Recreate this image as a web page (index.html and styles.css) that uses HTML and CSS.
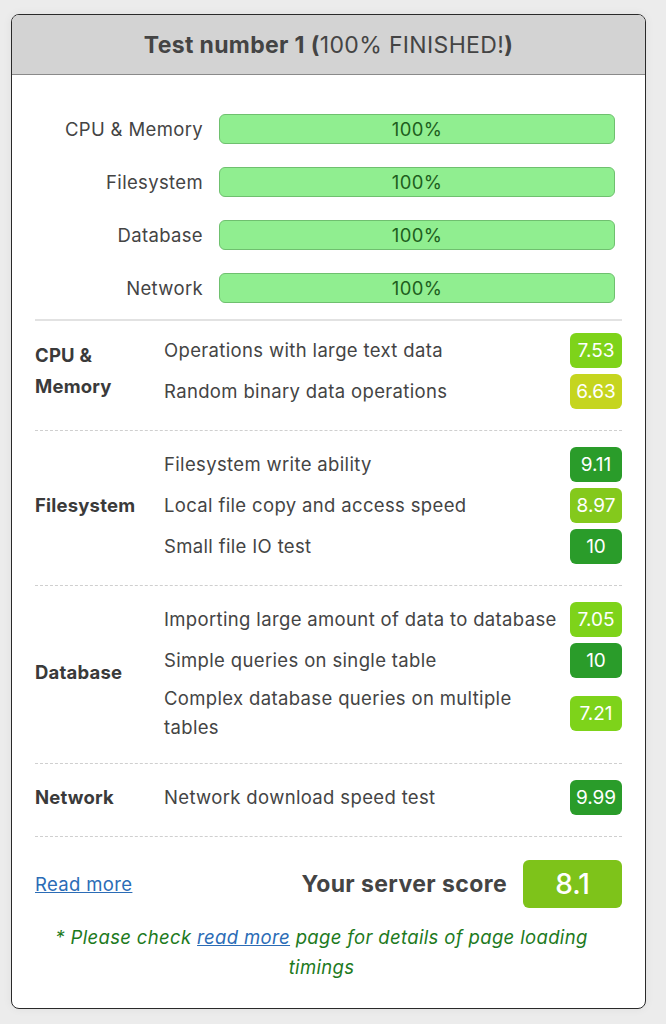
FILE: index.html
```html
<!DOCTYPE html>
<html>
<head>
<meta charset="utf-8">
<link rel="stylesheet" href="styles.css">
</head>
<body>
<div class="card">
  <div class="card-head">
    <h1 class="title">Test number 1 (<span class="title-status">100% FINISHED!</span>)</h1>
  </div>
  <div class="card-body">
    <div class="progress">
      <div class="progress-row">
        <div class="progress-label">CPU &amp; Memory</div>
        <div class="bar">100%</div>
      </div>
      <div class="progress-row">
        <div class="progress-label">Filesystem</div>
        <div class="bar">100%</div>
      </div>
      <div class="progress-row">
        <div class="progress-label">Database</div>
        <div class="bar">100%</div>
      </div>
      <div class="progress-row">
        <div class="progress-label">Network</div>
        <div class="bar">100%</div>
      </div>
    </div>

    <div class="results">
      <div class="group group-first">
        <div class="group-name">CPU &amp; Memory</div>
        <div class="tests">
          <div class="test"><span class="test-name">Operations with large text data</span><span class="score s-lime">7.53</span></div>
          <div class="test"><span class="test-name">Random binary data operations</span><span class="score s-yellow">6.63</span></div>
        </div>
      </div>
      <div class="group">
        <div class="group-name">Filesystem</div>
        <div class="tests">
          <div class="test"><span class="test-name">Filesystem write ability</span><span class="score s-green">9.11</span></div>
          <div class="test"><span class="test-name">Local file copy and access speed</span><span class="score s-lime2">8.97</span></div>
          <div class="test"><span class="test-name">Small file IO test</span><span class="score s-green">10</span></div>
        </div>
      </div>
      <div class="group">
        <div class="group-name">Database</div>
        <div class="tests">
          <div class="test"><span class="test-name">Importing large amount of data to database</span><span class="score s-lime">7.05</span></div>
          <div class="test"><span class="test-name">Simple queries on single table</span><span class="score s-green">10</span></div>
          <div class="test"><span class="test-name">Complex database queries on multiple tables</span><span class="score s-lime">7.21</span></div>
        </div>
      </div>
      <div class="group">
        <div class="group-name">Network</div>
        <div class="tests">
          <div class="test"><span class="test-name">Network download speed test</span><span class="score s-green">9.99</span></div>
        </div>
      </div>
    </div>

    <div class="summary">
      <a class="link" href="#">Read more</a>
      <div class="total">
        <span class="total-label">Your server score</span>
        <span class="total-score">8.1</span>
      </div>
    </div>
    <p class="note">* Please check <a class="link" href="#">read more</a> page for details of page loading timings</p>
  </div>
</div>
</body>
</html>
```

FILE: styles.css
```css
html, body {
  margin: 0;
  padding: 0;
}
body {
  background: #ececec;
  font-family: Inter, Roboto, "Liberation Sans", sans-serif;
  color: #444;
  padding: 14px 20px 16px 11px;
}
.card {
  width: 633px;
  background: #fff;
  border: 1px solid #2a2a2a;
  border-radius: 8px;
  overflow: hidden;
  box-shadow: 0 0 10px rgba(0,0,0,0.06);
}
.card-head {
  background: #d3d3d3;
  border-bottom: 1px solid #8a8a8a;
  height: 59px;
  display: flex;
  align-items: center;
  justify-content: center;
}
.title {
  margin: 0;
  font-size: 23px;
  font-weight: 700;
  letter-spacing: 0.35px;
  color: #444;
}
.title-status {
  font-weight: 400;
}
.card-body {
  padding: 0 23px 26px 23px;
}
.progress {
  padding: 39px 7px 16px 0;
  border-bottom: 2px solid #e2e2e2;
  display: flex;
  flex-direction: column;
  gap: 23px;
}
.progress-row {
  display: grid;
  grid-template-columns: 168px 1fr;
  column-gap: 16px;
  align-items: center;
}
.progress-label {
  text-align: right;
  font-size: 18.5px;
  letter-spacing: 0.35px;
  color: #444;
}
.bar {
  height: 28px;
  background: #90ee90;
  border: 1px solid #6fc06f;
  border-radius: 6px;
  text-align: center;
  line-height: 28px;
  font-size: 18.5px;
  letter-spacing: 0.35px;
  color: #1e5e1e;
}
.group {
  display: grid;
  grid-template-columns: 116px 1fr;
  column-gap: 13px;
  align-items: center;
  padding: 13px 0 18px;
  border-bottom: 1px dashed #cfcfcf;
}
.group-first {
  padding-top: 9px;
}
.group-name {
  font-size: 18.5px;
  font-weight: 700;
  letter-spacing: 0.2px;
  line-height: 31px;
  color: #3a3a3a;
}
.test {
  display: flex;
  align-items: center;
  justify-content: space-between;
  padding: 3px 0;
  gap: 6px;
}
.test-name {
  font-size: 18.5px;
  letter-spacing: 0.35px;
  line-height: 29px;
  color: #444;
}
.score {
  flex: none;
  width: 52px;
  height: 35px;
  border-radius: 6px;
  color: #fff;
  font-size: 19px;
  line-height: 35px;
  text-align: center;
}
.s-lime { background: #7ed31a; }
.s-lime2 { background: #84c91c; }
.s-yellow { background: #c5d51f; }
.s-green { background: #2a9c2a; }
.summary {
  display: flex;
  align-items: center;
  justify-content: space-between;
  padding-top: 23px;
}
.link {
  color: #2b6cb6;
  text-decoration: underline;
  font-size: 18.5px;
  letter-spacing: 0.35px;
}
.total {
  display: flex;
  align-items: center;
  gap: 16px;
}
.total-label {
  font-size: 23px;
  font-weight: 700;
  letter-spacing: 0.4px;
  color: #444;
}
.total-score {
  width: 99px;
  height: 48px;
  border-radius: 6px;
  background: #7ec31a;
  color: #fff;
  font-size: 28px;
  font-weight: 500;
  line-height: 48px;
  text-align: center;
}
.note {
  margin: 14px 0 0;
  text-align: center;
  font-style: italic;
  font-size: 18.5px;
  letter-spacing: 0.35px;
  line-height: 30px;
  color: #1d7a1d;
  padding: 0 19px 0 5px;
}
.note .link {
  font-size: inherit;
}
```
